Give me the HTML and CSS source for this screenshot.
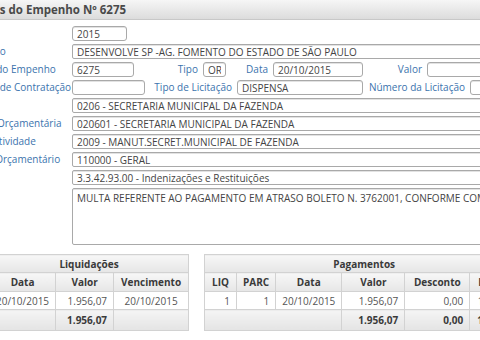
FILE: index.html
```html
<!DOCTYPE html>
<html lang="pt-BR">
<head>
  <meta charset="UTF-8" />
  <title>Dados do Empenho</title>
  <link rel="stylesheet" href="styles.css">
</head>
<body>
  <div class="page">
    <div class="header">Dados do Empenho Nº 6275</div>

    <div class="form">
      <label>Ano</label>
      <div class="fields"><input class="w-ano" value="2015" readonly /></div>

      <label>Favorecido</label>
      <div class="fields"><input class="wide" value="DESENVOLVE SP -AG. FOMENTO DO ESTADO DE SÃO PAULO" readonly /></div>

      <label>Número do Empenho</label>
      <div class="fields">
        <input class="w-num" value="6275" readonly />
        <span class="field-label lb-tipo">Tipo</span>
        <input class="w-tipo" value="OR" readonly />
        <span class="field-label lb-data">Data</span>
        <input class="w-data" value="20/10/2015" readonly />
        <span class="field-label lb-valor">Valor</span>
        <input class="w-valor" value="" readonly />
      </div>

      <label>Processo de Contratação</label>
      <div class="fields">
        <input class="w-proc" value="" readonly />
        <span class="field-label lb-licit">Tipo de Licitação</span>
        <input class="w-licit" value="DISPENSA" readonly />
        <span class="field-label lb-numlicit">Número da Licitação</span>
        <input class="w-numlicit" value="" readonly />
      </div>

      <label>Órgão</label>
      <div class="fields"><input class="wide" value="0206 - SECRETARIA MUNICIPAL DA FAZENDA" readonly /></div>

      <label>Unidade Orçamentária</label>
      <div class="fields"><input class="wide" value="020601 - SECRETARIA MUNICIPAL DA FAZENDA" readonly /></div>

      <label>Projeto/Atividade</label>
      <div class="fields"><input class="wide" value="2009 - MANUT.SECRET.MUNICIPAL DE FAZENDA" readonly /></div>

      <label>Recurso Orçamentário</label>
      <div class="fields"><input class="wide" value="110000 - GERAL" readonly /></div>

      <label>Elemento</label>
      <div class="fields"><input class="wide" value="3.3.42.93.00 - Indenizações e Restituições" readonly /></div>

      <label>Histórico</label>
      <div class="fields"><textarea class="wide" readonly>MULTA REFERENTE AO PAGAMENTO EM ATRASO BOLETO N. 3762001, CONFORME COMPROVANTE ANEXO.</textarea></div>
    </div>

    <div class="tables">
      <table class="grid liq">
        <tr class="title"><th colspan="3">Liquidações</th></tr>
        <tr class="cols">
          <th class="c-data">Data</th>
          <th class="c-valor num">Valor</th>
          <th class="c-venc">Vencimento</th>
        </tr>
        <tr class="row">
          <td class="center">20/10/2015</td>
          <td class="num">1.956,07</td>
          <td class="center">20/10/2015</td>
        </tr>
        <tr class="foot">
          <td></td>
          <td class="num">1.956,07</td>
          <td></td>
        </tr>
      </table>

      <table class="grid pag">
        <tr class="title"><th colspan="6">Pagamentos</th></tr>
        <tr class="cols">
          <th class="c-liq num">LIQ</th>
          <th class="c-parc num">PARC</th>
          <th class="c-pdata">Data</th>
          <th class="c-pvalor num">Valor</th>
          <th class="c-desc num">Desconto</th>
          <th class="c-liquido num">Líquido</th>
        </tr>
        <tr class="row">
          <td class="num">1</td>
          <td class="num">1</td>
          <td class="center">20/10/2015</td>
          <td class="num">1.956,07</td>
          <td class="num">0,00</td>
          <td class="num">1.956,07</td>
        </tr>
        <tr class="foot">
          <td colspan="3"></td>
          <td class="num">1.956,07</td>
          <td class="num">0,00</td>
          <td class="num">1.956,07</td>
        </tr>
      </table>
    </div>
  </div>
</body>
</html>
```

FILE: styles.css
```css
html, body {
  margin: 0;
  padding: 0;
  overflow: hidden;
  background: #fff;
}
body {
  font-family: "Open Sans", Arial, sans-serif;
  font-size: 10px;
  color: #444;
}
.page {
  margin-left: -50px;
  width: 640px;
}
.header {
  height: 20px;
  line-height: 20px;
  padding-left: 20px;
  font-size: 11.5px;
  font-weight: bold;
  color: #4a4a4a;
  background: linear-gradient(#f6f6f6, #dcdcdc);
  border-bottom: 1px solid #c8c8c8;
  box-sizing: border-box;
}
.form {
  display: grid;
  grid-template-columns: 117px 1fr;
  row-gap: 3px;
  padding: 6px 0 0 5px;
}
.form label,
.field-label {
  color: #3b73ad;
  line-height: 15px;
  white-space: nowrap;
}
.fields {
  display: flex;
  align-items: center;
}
input,
textarea {
  box-sizing: border-box;
  height: 15px;
  padding: 0 4px;
  margin: 0;
  font-family: inherit;
  font-size: 10px;
  color: #444;
  background: #fff;
  border: 1px solid #a9a9a9;
  border-radius: 3px;
  box-shadow: inset 0 1px 0 #e2e2e2;
  outline: none;
}
.wide {
  flex: 1;
  border-radius: 2px;
}
textarea.wide {
  height: 57px;
  padding: 2px 4px;
  line-height: 14px;
  resize: none;
  overflow: hidden;
}
.field-label {
  text-align: right;
  margin-right: 5px;
  flex: none;
}
.w-ano { width: 55px; }
.w-num { width: 62px; }
.w-tipo { width: 23px; }
.w-data { width: 90px; }
.w-valor { width: 120px; }
.w-proc { width: 73px; }
.w-licit { width: 126px; }
.w-numlicit { width: 100px; }
.lb-tipo { width: 64px; }
.lb-data { width: 42px; }
.lb-valor { width: 59px; }
.lb-licit { width: 87px; }
.lb-numlicit { width: 102px; }

.tables {
  display: flex;
  align-items: flex-start;
  gap: 15px;
  margin-top: 9px;
  padding-left: 39px;
}
.grid {
  border-collapse: collapse;
  table-layout: fixed;
  border: 1px solid #c4c4c4;
}
.grid th,
.grid td {
  border: 1px solid #d2d2d2;
  padding: 0 6px;
  white-space: nowrap;
  overflow: hidden;
}
.grid th {
  font-weight: bold;
  color: #3a3a3a;
  background: linear-gradient(#f7f7f7, #e6e6e6);
}
.grid .title th {
  height: 17px;
  text-align: center;
}
.grid .cols th {
  height: 18px;
  text-align: center;
}
.grid .row td {
  height: 17px;
  color: #555;
  background: #fff;
}
.grid .foot td {
  height: 20px;
  font-weight: bold;
  color: #3a3a3a;
  background: linear-gradient(#f4f4f4, #e4e4e4);
}
.grid .num {
  text-align: right;
}
.grid .center {
  text-align: center;
}
.c-data { width: 53px; }
.c-valor { width: 45px; }
.c-venc { width: 62px; }
.c-liq { width: 19px; }
.c-parc { width: 24px; }
.c-pdata { width: 50px; }
.c-pvalor { width: 50px; }
.c-desc { width: 52px; }
.c-liquido { width: 41px; }
```
